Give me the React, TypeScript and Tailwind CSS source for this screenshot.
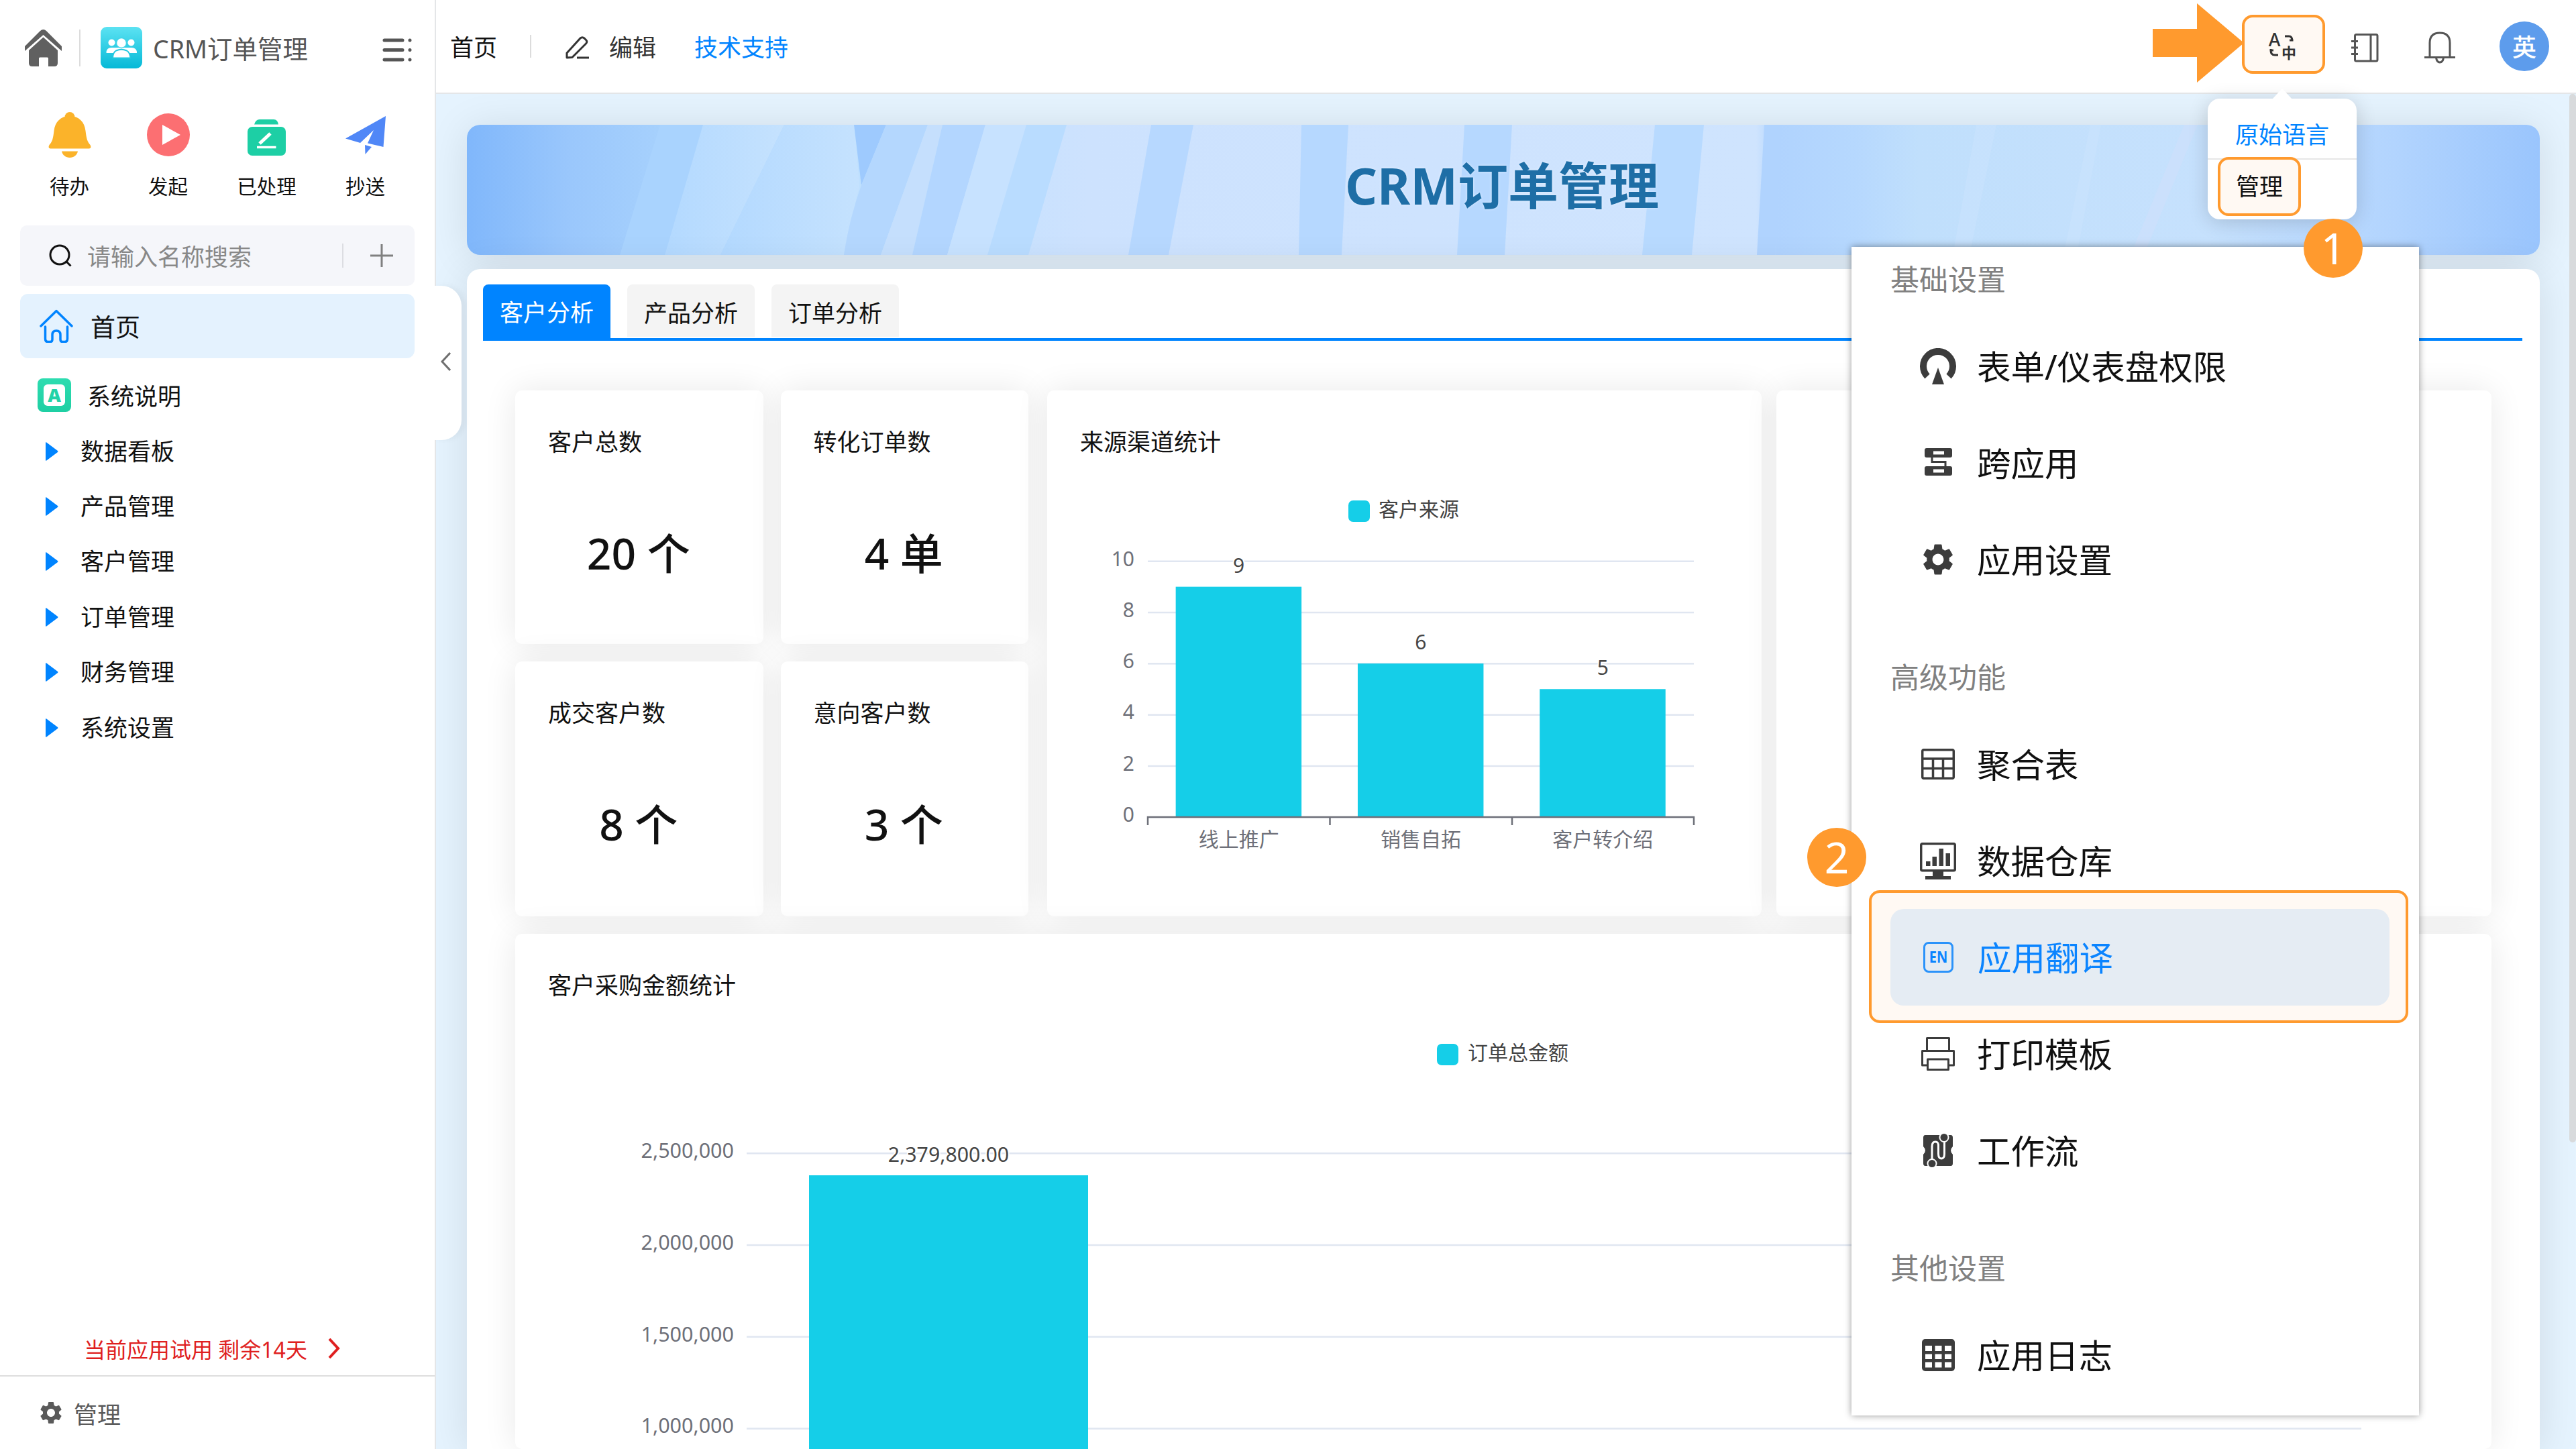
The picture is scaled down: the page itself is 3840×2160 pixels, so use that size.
import type { ReactNode } from "react";
import { MdSettings } from "react-icons/md";

const quickLinks = [
  { label: "待办", icon: <TodoIcon /> },
  { label: "发起", icon: <StartIcon /> },
  { label: "已处理", icon: <DoneIcon /> },
  { label: "抄送", icon: <SendIcon /> },
];

const folders = [
  "数据看板",
  "产品管理",
  "客户管理",
  "订单管理",
  "财务管理",
  "系统设置",
];

const sources = [
  { name: "线上推广", value: 9 },
  { name: "销售自拓", value: 6 },
  { name: "客户转介绍", value: 5 },
];

function TodoIcon() {
  return (
    <svg className="w-16 h-[68px] fill-[#fbb32a]" viewBox="0 0 64 68">
      <circle cx="32" cy="7.500" r="7.500" />
      <path d="M32 6C18 6 10 15 8.500 28C7 40 6 44 1.500 49Q-1 54 3 54.500H61Q65 54 62.500 49C58 44 57 40 55.500 28C54 15 46 6 32 6Z" />
      <path d="M20 58.500H44C43 64 38 68 32 68S21 64 20 58.500Z" />
    </svg>
  );
}

function StartIcon() {
  return (
    <svg className="w-16 h-16" viewBox="0 0 64 64">
      <circle cx="32" cy="32" r="32" fill="#fc6f72" />
      <path d="M23 17L50 32L23 47Z" fill="#fff" />
    </svg>
  );
}

function DoneIcon() {
  return (
    <svg className="w-[57px] h-[54px] mt-2" viewBox="0 0 57 54">
      <path d="M10 7.500Q12 0 18 0H39Q45 0 46 7.500Z" fill="#1dcfa5" />
      <rect y="11" width="57" height="43" rx="7" fill="#1dcfa5" />
      <path d="M18 36L34 21" stroke="#fff" strokeWidth="5" />
      <path d="M14 41.500H42.500" stroke="#fff" strokeWidth="3.500" />
    </svg>
  );
}

function SendIcon() {
  return (
    <svg className="w-[60px] h-[57px]" viewBox="0 0 60 57">
      <path d="M0 33.500L60 0L56.500 46L33 40.500L42 21L22 40Z" fill="#5087f7" />
      <path d="M29 43L39 46L29.500 57Z" fill="#5087f7" />
    </svg>
  );
}

function Sidebar() {
  return (
    <aside className="relative flex w-[650px] shrink-0 flex-col border-r-2 border-[#e4e6e8] bg-white">
      <div className="flex h-[142px] items-center pl-[37px] pr-[34px]">
        <svg className="w-[55px] h-[55px] fill-[#606060]" viewBox="0 0 55 55">
          <path d="M27.500 0Q30 0 32 2L55 25V32L27.500 8L0 32V25L23 2Q25 0 27.500 0Z" />
          <path d="M27.500 11.500L49 31V50Q49 55 44 55H35V43Q35 41.500 33.500 41.500H22.500Q21 41.500 21 43V55H11Q6 55 6 50V31Z" />
        </svg>
        <div className="ml-[26px] h-[55px] w-0.5 bg-[#dcdcdc]" />
        <svg className="ml-[30px] w-[62px] h-[62px]" viewBox="0 0 62 62">
          <defs>
            <linearGradient id="logo" x1="0" y1="0" x2="0" y2="1">
              <stop offset="0" stopColor="#5ce2f2" />
              <stop offset="1" stopColor="#05b9d7" />
            </linearGradient>
          </defs>
          <rect width="62" height="62" rx="9" fill="url(#logo)" />
          <g fill="#fff">
            <circle cx="16.500" cy="23.500" r="5" />
            <circle cx="45.500" cy="23.500" r="5" />
            <path d="M8.500 39Q8.500 31 16 31H46Q54 31 54 39Z" />
            <path
              d="M18 46.500Q18.500 38 23 35.500Q31 32 39 35.500Q43.500 38 44.500 46.500Z"
              stroke="#22c8e0"
              strokeWidth="2"
            />
            <circle
              cx="31"
              cy="24"
              r="7.500"
              stroke="#3fd4e8"
              strokeWidth="1.500"
            />
          </g>
        </svg>
        <span className="ml-4 mt-1 text-[37.5px] leading-[44px] text-[#555]">
          CRM订单管理
        </span>
        <svg
          className="ml-auto mt-2 w-[44px] h-[36px]"
          viewBox="0 0 44 36"
          fill="none"
          stroke="#555"
          strokeWidth="5"
          strokeLinecap="round"
        >
          <path d="M3 3H30M3 17.500H30M3 32H30M41 3V3.100M41 17.500V17.600M41 32V32.100" />
        </svg>
      </div>

      <div className="grid h-[194px] grid-cols-4 px-[30px] pt-[23px]">
        {quickLinks.map((q) => (
          <div key={q.label} className="flex flex-col items-center">
            <div className="flex h-[72px] items-center">{q.icon}</div>
            <span className="mt-[21px] text-[29.5px] leading-10">
              {q.label}
            </span>
          </div>
        ))}
      </div>

      <div className="mx-[30px] flex h-[90px] items-center rounded-[10px] bg-[#f5f6fa] pl-[43px] pr-8">
        <svg
          className="w-[34px] h-[34px]"
          viewBox="0 0 34 34"
          fill="none"
          stroke="#111"
          strokeWidth="3"
        >
          <circle cx="16" cy="16" r="14" />
          <path d="M26 26L32.500 32.500" />
        </svg>
        <span className="ml-[23px] mt-1 text-[35px] leading-[44px] text-[#888]">
          请输入名称搜索
        </span>
        <div className="ml-auto h-9 w-0.5 bg-[#dcdde2]" />
        <svg
          className="ml-10 w-[34px] h-[34px]"
          viewBox="0 0 34 34"
          stroke="#808080"
          strokeWidth="3"
        >
          <path d="M17 0V34M0 17H34" />
        </svg>
      </div>

      <div className="mx-[30px] mt-3 flex h-[96px] items-center rounded-xl bg-[#e4f2fe] pl-[29px]">
        <svg
          className="w-[50px] h-[50px]"
          viewBox="0 0 50 50"
          fill="none"
          stroke="#0084ff"
          strokeWidth="3.500"
          strokeLinecap="round"
          strokeLinejoin="round"
        >
          <path d="M2 25L25 2.500L48 25" />
          <path d="M8.500 26V44Q8.500 48.500 12 48.500H16Q19 48.500 19 45V38Q19 32 25 32T31 38V45Q31 48.500 34 48.500H38Q41.500 48.500 41.500 44V26" />
        </svg>
        <span className="ml-[26px] mt-1 text-[37px] leading-[44px]">首页</span>
      </div>

      <div className="mt-[12px] flex h-[85.500px] items-center pl-[56px]">
        <div className="flex size-[50px] items-center justify-center rounded-lg bg-gradient-to-b from-[#2ddcb0] to-[#1ecfa3]">
          <div className="flex size-8 items-center justify-center rounded-[6px] bg-white text-[27px] leading-8 font-black text-[#22d3a8]">
            A
          </div>
        </div>
        <span className="ml-[24px] mt-1 text-[35px] leading-[44px]">
          系统说明
        </span>
      </div>
      {folders.map((f) => (
        <div key={f} className="flex h-[82.400px] items-center pl-[68px]">
          <svg
            className="w-[19px] h-7 fill-[#0084ff]"
            viewBox="0 0 19 28"
          >
            <path d="M0 0.500Q1 0 2 1L18 13Q19 14 18 15L2 27Q1 28 0 27.500Z" />
          </svg>
          <span className="ml-[33px] text-[35px] leading-[44px]">{f}</span>
        </div>
      ))}

      <div className="mt-auto flex h-[76px] items-center pl-[125px] text-[#df1f1f]">
        <span className="text-[32px] leading-10">当前应用试用 剩余14天</span>
        <svg
          className="ml-[31px] mb-1 w-[18px] h-[30px]"
          viewBox="0 0 18 30"
          fill="none"
          stroke="#df1f1f"
          strokeWidth="4"
        >
          <path d="M2 1L15 15L2 29" />
        </svg>
      </div>
      <div className="flex h-[110px] items-center border-t-2 border-[#dedede] pl-[56px] text-[#5a5a5a]">
        <MdSettings className="size-10" />
        <span className="ml-[14px] mt-1.5 text-[35px] leading-[44px]">
          管理
        </span>
      </div>

      {/* Collapse handle */}
      <div className="absolute left-[646px] top-[426px] z-10 flex h-[230px] w-[42px] items-center rounded-r-[30px] bg-white pb-1 pl-[11px] shadow-[6px_0_8px_rgba(0,0,0,0.04)]">
        <svg
          className="w-[15px] h-7"
          viewBox="0 0 15 28"
          fill="none"
          stroke="#707070"
          strokeWidth="3"
        >
          <path d="M14 1L2 14L14 27" />
        </svg>
      </div>
    </aside>
  );
}

function TopBar() {
  return (
    <header className="flex h-[140px] shrink-0 items-center border-b-2 border-[#e4e6e8] bg-white pl-[21px] pr-10 text-[35px] leading-[44px]">
      <span className="mt-1">首页</span>
      <div className="ml-[49px] h-[34px] w-0.5 bg-[#dcdcdc]" />
      <svg
        className="ml-[51px] mt-1 w-[36px] h-[34px]"
        viewBox="0 0 36 34"
        fill="none"
        stroke="#333"
        strokeWidth="3"
        strokeLinejoin="round"
      >
        <path d="M2 32V25L22 3Q25 0.500 28 3L30.500 5.500Q33 8 30.500 11L10 31.500Z" />
        <path d="M17 32H35" />
      </svg>
      <span className="ml-[29px] mt-1 text-[#333]">编辑</span>
      <span className="ml-[57px] mt-1 text-[#0084ff]">技术支持</span>

      <svg
        className="ml-auto mb-2.5 w-[136px] h-[118px] fill-[#ff9a2e]"
        viewBox="0 0 136 118"
      >
        <path d="M0 38H66V0L136 59L66 118V80H0Z" />
      </svg>
      <div className="-ml-[3px] mb-1.5 flex h-[88px] w-[124px] items-center justify-center rounded-2xl border-4 border-[#ff9a2e] bg-[#fff9f3]">
        <svg
          className="mt-2 -ml-1 w-[58px] h-[58px]"
          viewBox="-8 -8 58 58"
          fill="none"
          stroke="#333"
          strokeWidth="3"
        >
          <text
            x="9.500"
            y="20"
            textAnchor="middle"
            fontSize="27"
            fontWeight="500"
            fill="#333"
            stroke="none"
          >
            A
          </text>
          <text
            x="31"
            y="38"
            textAnchor="middle"
            fontSize="22"
            fontWeight="700"
            fill="#333"
            stroke="none"
          >
            中
          </text>
          <path d="M25 5H31Q36 5 36 12M32 11H37.500" />
          <path d="M4 24V26Q4 33 10 33H15M2.500 26H8" />
        </svg>
      </div>
      <svg
        className="ml-[39px] mt-1 w-[41px] h-[43px]"
        viewBox="0 0 41 43"
        fill="none"
        stroke="#555"
        strokeWidth="3"
      >
        <rect x="5.500" y="1.500" width="33.500" height="39.500" rx="2" />
        <path d="M29 2V41M0 11.500H10M0 21H10M0 30.500H10" />
      </svg>
      <svg
        className="ml-[68px] mt-1 w-[46px] h-[48px]"
        viewBox="0 0 46 48"
        fill="none"
        stroke="#555"
        strokeWidth="3"
      >
        <path d="M8 38V17Q8 2 23 2T38 17V38M0 38.500H46" />
        <path d="M17.500 39Q18.500 46 23 46T28.500 39" />
      </svg>
      <div className="ml-[66px] flex size-[74px] items-center justify-center rounded-full bg-[#5d9cec] text-[36px] font-medium text-white">
        <span className="mt-1">英</span>
      </div>
    </header>
  );
}

function Banner() {
  return (
    <div className="grid h-[194px] shrink-0 overflow-hidden rounded-[20px] shadow-[0_4px_60px_rgba(0,0,0,0.1)]">
      <svg
        className="col-start-1 row-start-1 h-[194px] w-full"
        viewBox="0 0 3090 194"
        preserveAspectRatio="none"
      >
        <defs>
          <linearGradient id="sky" x1="0" y1="0" x2="1" y2="0">
            <stop offset="0" stopColor="#80b7fb" />
            <stop offset="0.05" stopColor="#9ac7fc" />
            <stop offset="0.1" stopColor="#a8d2fd" />
            <stop offset="0.19" stopColor="#bfe0fe" />
            <stop offset="0.3" stopColor="#cde2fe" />
            <stop offset="0.622" stopColor="#cfe4fe" />
            <stop offset="0.632" stopColor="#b0d3fe" />
            <stop offset="0.67" stopColor="#b6d8fe" />
            <stop offset="0.7" stopColor="#c0dffc" />
            <stop offset="0.84" stopColor="#c6e1fd" />
            <stop offset="0.93" stopColor="#b2d4fe" />
            <stop offset="1" stopColor="#9ac5fd" />
          </linearGradient>
          <linearGradient id="fold" x1="0" y1="0" x2="1" y2="0">
            <stop offset="0" stopColor="#b3d9ff" />
            <stop offset="1" stopColor="#c5e2fe" />
          </linearGradient>
        </defs>
        <rect width="3090" height="194" fill="url(#sky)" />
        <path d="M288 0H352L295 194H228Z" fill="#a9d3fe" />
        <path d="M352 0H473L378 194H295Z" fill="url(#fold)" />
        <path d="M473 0H578L585 92L562 194H378Z" fill="url(#fold)" />
        <path d="M577 0H625L588 90Z" fill="#9ecafe" />
        <path d="M625 0H687L617 194H562Q570 140 588 90Z" fill="#b4d7fe" />
        <path d="M687 0H709L664 194H617Z" fill="#c5dffd" />
        <path d="M709 0H773L716 194H664Z" fill="#b3d6ff" />
        <path d="M773 0H834L776 194H716Z" fill="#c7e2ff" />
        <path d="M834 0H894L837 194H776Z" fill="#b9dcff" />
        <path d="M1020 0H1083L1046 194H986Z" fill="#b7d8ff" />
        <path d="M1244 0H1314L1304 194H1240Z" fill="#b6d8ff" />
        <path d="M1487 0H1558L1547 194H1476Z" fill="#b6d8ff" />
        <path d="M1771 0H1844L1826 194H1752Z" fill="#b8daff" />
        <path d="M1934 0H1960L1950 194H1923Z" fill="#b0d3fe" />
        <path d="M2250 0H2280L2240 194H2215Z" fill="#cce3fd" opacity="0.5" />
        <path d="M2420 0H2436L2400 194H2380Z" fill="#cce3fd" opacity="0.5" />
        <path d="M2560 0H2580L2500 194H2480Z" fill="#cfe0fc" opacity="0.6" />
      </svg>
      <h1 className="z-0 col-start-1 row-start-1 -mt-1 self-center pb-2.5 pr-1 text-center text-[75px] leading-[90px] font-bold text-[#1e6ea6] [text-shadow:0_0_4px_rgba(255,255,255,0.5)]">
        CRM订单管理
      </h1>
    </div>
  );
}

function Card({ title, children }: { title?: string; children?: ReactNode }) {
  return (
    <div className="flex h-full flex-col rounded-[10px] bg-white pt-[55px] shadow-[0_0_50px_rgba(0,0,0,0.09)]">
      {title && (
        <h2 className="pl-[49px] text-[35px] leading-[44px]">{title}</h2>
      )}
      {children}
    </div>
  );
}

function Stat({ title, value }: { title: string; value: string }) {
  return (
    <Card title={title}>
      <p className="mt-[99px] pr-0.5 text-center text-[64px] leading-[90px] font-medium">
        {value}
      </p>
    </Card>
  );
}

function SourceChart() {
  const zero = 537;
  const unit = 38.15;
  const band = 271.3;
  return (
    <svg className="h-[685px] w-full text-[30px]" viewBox="0 0 1065 685">
      <rect x="449" y="65" width="32" height="32" rx="7" fill="#15cee8" />
      <text x="494" y="89" fill="#444">
        客户来源
      </text>
      {[0, 2, 4, 6, 8, 10].map((t) => (
        <g key={t}>
          <text
            x="130"
            y={zero - t * unit + 7}
            textAnchor="end"
            fill="#6e7079"
          >
            {t}
          </text>
          <rect
            x="150"
            y={zero - t * unit - 1}
            width="814"
            height="2.500"
            fill="#e0e6f1"
          />
        </g>
      ))}
      {sources.map((s, i) => {
        const cx = 150 + band * (i + 0.5);
        const top = zero - s.value * unit;
        return (
          <g key={s.name} textAnchor="middle">
            <rect
              x={cx - 94}
              y={top}
              width="187.500"
              height={zero - top}
              fill="#15cee8"
            />
            <text
              x={cx}
              y={top - 21}
              fill="#464646"
              stroke="#fff"
              strokeWidth="4"
              paintOrder="stroke"
            >
              {s.value}
            </text>
            <text x={cx} y="581" fill="#6e7079">
              {s.name}
            </text>
          </g>
        );
      })}
      <path
        d="M150 549V537H964V549M421.500 537V549M693 537V549"
        fill="none"
        stroke="#6e7079"
        strokeWidth="2.500"
      />
    </svg>
  );
}

function AmountChart() {
  return (
    <svg className="h-[669px] w-full text-[30px]" viewBox="0 0 2946 669">
      <rect x="1374" y="65" width="32" height="32" rx="7" fill="#15cee8" />
      <text x="1420" y="89" fill="#444">
        订单总金额
      </text>
      {["2,500,000", "2,000,000", "1,500,000", "1,000,000"].map((t, i) => (
        <g key={t}>
          <text
            x="326"
            y={228 + i * 136.8 + 7}
            textAnchor="end"
            fontSize="30.500"
            fill="#6e7079"
          >
            {t}
          </text>
          <rect
            x="345"
            y={228 + i * 136.8 - 1}
            width="2407"
            height="2.500"
            fill="#e0e6f1"
          />
        </g>
      ))}
      <rect x="438" y="261" width="416" height="408" fill="#15cee8" />
      <text
        x="646"
        y="241"
        textAnchor="middle"
        fontSize="30.300"
        fill="#464646"
        stroke="#fff"
        strokeWidth="4"
        paintOrder="stroke"
      >
        2,379,800.00
      </text>
    </svg>
  );
}

function Dashboard() {
  return (
    <main className="flex flex-1 bg-[#e5f3fe]">
      <div className="flex flex-1 flex-col gap-[21px] pl-[46px] pr-[44px] pt-[46px]">
        <Banner />
        <section className="flex-1 rounded-t-[20px] bg-white pl-6 pr-[26px] pt-[23px] shadow-[0_4px_60px_rgba(0,0,0,0.1)]">
          <div className="flex h-[84px] items-start gap-[25px] border-b-4 border-[#0084ff] text-[35px]">
            <div className="flex h-[81px] w-[190px] items-center justify-center rounded-t-lg bg-[#0084ff] pt-1 text-white">
              客户分析
            </div>
            <div className="flex h-[78px] w-[190px] items-center justify-center rounded-t-lg bg-[#f4f4f4] pt-2">
              产品分析
            </div>
            <div className="flex h-[78px] w-[190px] items-center justify-center rounded-t-lg bg-[#f4f4f4] pt-2">
              订单分析
            </div>
          </div>

          <div className="mt-[74px] ml-12 flex w-[2946px] flex-col gap-[26px]">
            <div className="flex h-[784px]">
              <div className="mr-[28px] grid w-[765px] grid-cols-2 grid-rows-[378px_380px] gap-[26px]">
                <Stat title="客户总数" value="20 个" />
                <Stat title="转化订单数" value="4 单" />
                <Stat title="成交客户数" value="8 个" />
                <Stat title="意向客户数" value="3 个" />
              </div>
              <div className="mr-[22px] w-[1065px]">
                <Card title="来源渠道统计">
                  <SourceChart />
                </Card>
              </div>
              <div className="flex-1">
                <Card />
              </div>
            </div>
            <div className="h-[768px]">
              <Card title="客户采购金额统计">
                <AmountChart />
              </Card>
            </div>
          </div>
        </section>
      </div>
      <div className="h-[1563px] w-2.5 rounded-full bg-[#d8dadc]" />
    </main>
  );
}

function LanguageMenu() {
  return (
    <div className="absolute left-[3291px] top-[147px] h-[180px] w-[222px] rounded-[18px] bg-white text-[35px] leading-[44px] shadow-[0_4px_30px_rgba(0,0,0,0.16)]">
      <svg
        className="absolute -top-[15px] left-[96px] w-[30px] h-4 fill-white"
        viewBox="0 0 30 16"
      >
        <path d="M0 16L15 0L30 16Z" />
      </svg>
      <div className="flex h-[91px] items-center justify-center border-b-2 border-[#e6e6e6] pt-[18px] text-[#0084ff]">
        原始语言
      </div>
      <div className="-mt-1 ml-[15px] flex h-[88px] w-[124px] items-center justify-center rounded-2xl border-4 border-[#ff9a2e] bg-[#fff9f3]">
        管理
      </div>
    </div>
  );
}

function DrawerTitle({ children }: { children: ReactNode }) {
  return (
    <div className="mb-[25px] pl-[58px] text-[43px] leading-[64px] text-[#808080]">
      {children}
    </div>
  );
}

function DrawerItem({ icon, label }: { icon: ReactNode; label: string }) {
  return (
    <div className="flex h-36 items-center pl-[99px]">
      <div className="flex w-[60px] justify-center">{icon}</div>
      <span className="ml-[28px] mt-0.5 text-[50.5px] leading-[60px]">
        {label}
      </span>
    </div>
  );
}

function PermissionIcon() {
  return (
    <svg className="w-[54px] h-[54px]" viewBox="0 0 54 54">
      <path
        d="M11 42A22 22 0 1 1 43 42"
        fill="none"
        stroke="#3c3c3c"
        strokeWidth="10"
      />
      <path d="M27 29L36 54H18Z" fill="#3c3c3c" />
    </svg>
  );
}

function CrossAppIcon() {
  return (
    <svg
      className="mb-1 w-[41px] h-[41px]"
      viewBox="0 0 41 41"
      fill="none"
      stroke="#3c3c3c"
    >
      <path
        fill="#3c3c3c"
        fillRule="evenodd"
        stroke="none"
        d="M3 0H38Q41 0 41 3V11Q41 14 38 14H3Q0 14 0 11V3Q0 0 3 0ZM13 4.500V9.500H29V4.500ZM3 27H38Q41 27 41 30V38Q41 41 38 41H3Q0 41 0 38V30Q0 27 3 27ZM13 31.500V36.500H29V31.500Z"
      />
      <path d="M11 13V20.500H31V28" strokeWidth="3" />
    </svg>
  );
}

function TableIcon() {
  return (
    <svg
      className="w-[50px] h-[46px]"
      viewBox="0 0 50 46"
      fill="none"
      stroke="#3c3c3c"
      strokeWidth="3.500"
    >
      <rect x="1.700" y="1.700" width="46.600" height="42.600" rx="2" />
      <path d="M2 15H48M2 29.500H48M17.500 15V44M32.500 15V44" />
    </svg>
  );
}

function WarehouseIcon() {
  return (
    <svg className="w-[54px] h-[55px]" viewBox="0 0 54 55">
      <rect
        x="1.700"
        y="1.700"
        width="50.600"
        height="40"
        rx="2"
        fill="none"
        stroke="#3c3c3c"
        strokeWidth="3.500"
      />
      <path
        d="M9 28H15.500V35H9ZM18.500 21H25V35H18.500ZM28.500 9H35V35H28.500ZM38.500 16H45V35H38.500ZM19 43H35V50H46V55H8V50H19Z"
        fill="#3c3c3c"
      />
    </svg>
  );
}

function PrinterIcon() {
  return (
    <svg
      className="w-[50px] h-[50px]"
      viewBox="0 0 50 50"
      fill="none"
      stroke="#3c3c3c"
      strokeWidth="3"
      strokeLinejoin="round"
    >
      <path d="M8.500 20V1.500H41.500V20" />
      <path d="M9 42H1.500V20.500H48.500V42H41" />
      <path d="M9.500 33H40.500V48.500H9.500Z" />
    </svg>
  );
}

function WorkflowIcon() {
  return (
    <svg className="w-[46px] h-[52px]" viewBox="0 0 46 52">
      <path
        d="M4 3H42Q45 3 45 7V20Q39 26 45 32V45Q45 49 42 49H4Q1 49 1 45V32Q7 26 1 20V7Q1 3 4 3Z"
        fill="#3c3c3c"
      />
      <path
        d="M14 44V20Q14 13 19 13T23.500 20V31Q23.500 38 28 38T32.500 31V9"
        fill="none"
        stroke="#fff"
        strokeWidth="3"
      />
      <circle
        cx="32"
        cy="6.500"
        r="6.500"
        fill="#3c3c3c"
        stroke="#fff"
        strokeWidth="2"
      />
      <circle
        cx="14"
        cy="45.500"
        r="6.500"
        fill="#3c3c3c"
        stroke="#fff"
        strokeWidth="2"
      />
    </svg>
  );
}

function LogIcon() {
  return (
    <svg className="w-[49px] h-[48px]" viewBox="0 0 49 48">
      <rect width="49" height="48" rx="5" fill="#3c3c3c" />
      <path
        d="M5 10H15V18H5ZM19.500 10H29.500V18H19.500ZM34 10H44V18H34ZM5 22.500H15V30H5ZM19.500 22.500H29.500V30H19.500ZM34 22.500H44V30H34ZM5 34.500H15V42.500H5ZM19.500 34.500H29.500V42.500H19.500ZM34 34.500H44V42.500H34Z"
        fill="#fff"
      />
    </svg>
  );
}

function SettingsDrawer() {
  return (
    <div className="absolute left-[2760px] top-[368px] h-[1742px] w-[846px] bg-white pt-[17px] shadow-[0_0_10px_rgba(0,0,0,0.4)]">
      <DrawerTitle>基础设置</DrawerTitle>
      <DrawerItem icon={<PermissionIcon />} label="表单/仪表盘权限" />
      <DrawerItem icon={<CrossAppIcon />} label="跨应用" />
      <DrawerItem
        icon={<MdSettings className="size-14 text-[#3c3c3c]" />}
        label="应用设置"
      />
      <div className="h-[72px]" />
      <DrawerTitle>高级功能</DrawerTitle>
      <DrawerItem icon={<TableIcon />} label="聚合表" />
      <DrawerItem icon={<WarehouseIcon />} label="数据仓库" />
      {/* Active entry with its callout frame */}
      <div className="-my-[28px] ml-[26px] h-[198px] w-[804px] rounded-2xl border-4 border-[#ff9a2e] bg-[#fff9f3] py-6 pl-7 pr-6">
        <div className="flex h-36 items-center rounded-[20px] bg-[#e5ecf3] pl-[49px] text-[#0a84ff]">
          <div className="flex h-[46px] w-[45px] items-center justify-center rounded-[8px] border-3 border-[#2b93fa] text-[20px] font-bold">
            <span className="scale-y-115">EN</span>
          </div>
          <span className="ml-9 mt-0.5 text-[50.5px] leading-[60px]">
            应用翻译
          </span>
        </div>
      </div>
      <div className="h-[2px]" />
      <DrawerItem icon={<PrinterIcon />} label="打印模板" />
      <DrawerItem icon={<WorkflowIcon />} label="工作流" />
      <div className="h-[72px]" />
      <DrawerTitle>其他设置</DrawerTitle>
      <DrawerItem icon={<LogIcon />} label="应用日志" />
    </div>
  );
}

export default function App() {
  return (
    <div className="relative flex h-[2160px] w-[3840px] overflow-hidden bg-white font-['Noto_Sans','Noto_Sans_CJK_SC',sans-serif] text-[#111]">
      <Sidebar />
      <div className="flex flex-1 flex-col">
        <TopBar />
        <Dashboard />
      </div>

      <LanguageMenu />
      <SettingsDrawer />
      <div className="absolute left-[3434px] top-[326px] flex size-[88px] items-center justify-center rounded-full bg-[#ff9a2e] text-[64px] leading-none text-white">
        1
      </div>
      <div className="absolute left-[2694px] top-[1234px] flex size-[88px] items-center justify-center rounded-full bg-[#ff9a2e] text-[64px] leading-none text-white">
        2
      </div>
    </div>
  );
}
